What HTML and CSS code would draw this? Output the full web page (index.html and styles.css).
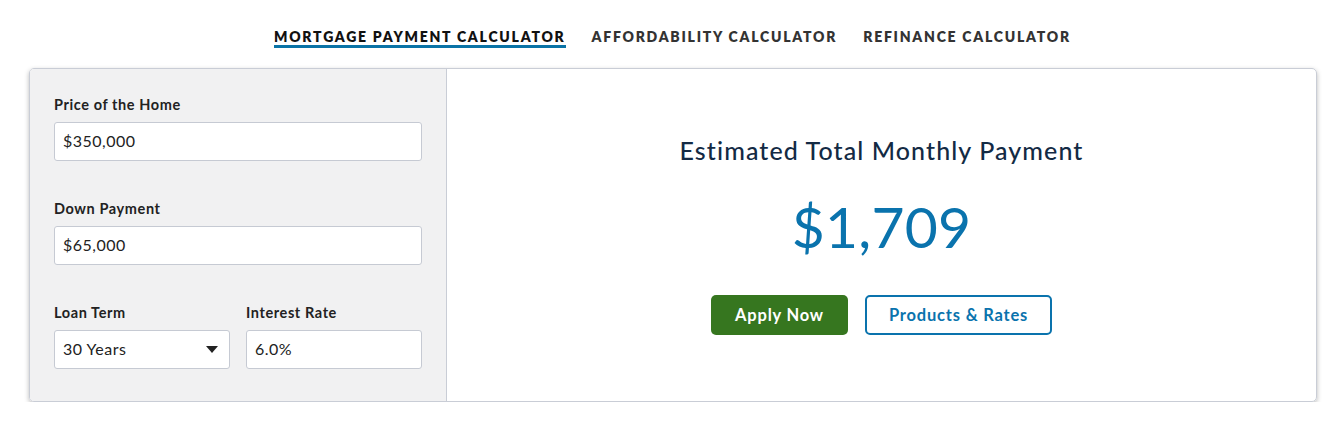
FILE: index.html
```html
<!DOCTYPE html>
<html lang="en">
<head>
<meta charset="utf-8">
<title>Mortgage Calculator</title>
<link rel="stylesheet" href="styles.css">
</head>
<body>
<div class="page">
  <nav class="tabs">
    <a class="tab active">MORTGAGE PAYMENT CALCULATOR</a>
    <a class="tab">AFFORDABILITY CALCULATOR</a>
    <a class="tab">REFINANCE CALCULATOR</a>
  </nav>
  <div class="card">
    <div class="inputs">
      <div class="field">
        <label class="label">Price of the Home</label>
        <div class="input">$350,000</div>
      </div>
      <div class="field">
        <label class="label">Down Payment</label>
        <div class="input">$65,000</div>
      </div>
      <div class="row">
        <div class="field">
          <label class="label">Loan Term</label>
          <div class="input select"><span>30 Years</span><span class="caret"></span></div>
        </div>
        <div class="field">
          <label class="label">Interest Rate</label>
          <div class="input">6.0%</div>
        </div>
      </div>
    </div>
    <div class="result">
      <h2 class="title">Estimated Total Monthly Payment</h2>
      <div class="amount">$1,709</div>
      <div class="buttons">
        <a class="btn primary">Apply Now</a>
        <a class="btn outline">Products &amp; Rates</a>
      </div>
    </div>
  </div>
</div>
</body>
</html>
```
FILE: styles.css
```css
* { box-sizing: border-box; }
html, body { margin: 0; padding: 0; background: #fff; }
body { font-family: "Lato", "Open Sans", sans-serif; color: #222; }
.page { padding: 0 20px 0 29px; width: 1336px; }
.tabs { display: flex; justify-content: center; gap: 26px; padding-top: 29px; }
.tab {
  font-weight: 800; font-size: 14px; letter-spacing: 1.75px; color: #333;
  line-height: 16px; padding-bottom: 0; border-bottom: 3px solid transparent;
}
.tab.active { color: #111; border-bottom-color: #0a73a6; }
.card {
  margin-top: 20px; width: 1288px; height: 334px;
  border: 1px solid #c9cdd6; border-radius: 5px;
  display: flex; overflow: hidden;
  box-shadow: 0 2px 5px rgba(0,0,0,0.28);
}
.inputs {
  width: 417px; background: #f1f1f2; border-right: 1px solid #c9cdd6;
  padding: 28px 24px 0 24px; display: flex; flex-direction: column; gap: 40px;
}
.field { display: flex; flex-direction: column; }
.label { font-weight: 700; font-size: 14.5px; letter-spacing: 0.6px; color: #222; line-height: 16px; margin-bottom: 9px; }
.input {
  height: 39px; background: #fff; border: 1px solid #c6cad3; border-radius: 3px;
  font-size: 16px; color: #222; padding: 0 8px 2px; display: flex; align-items: center;
  letter-spacing: 0.5px;
}
.row { display: flex; gap: 16px; }
.row .field { width: 176px; }
.select { justify-content: space-between; padding-right: 11px; }
.caret { width: 0; height: 0; border-left: 6px solid transparent; border-right: 6px solid transparent; border-top: 7px solid #222; margin-top: 2px; }
.result { flex: 1; display: flex; flex-direction: column; align-items: center; padding-top: 65px; }
.title { margin: 0; font-weight: 500; font-size: 25px; letter-spacing: 1.1px; color: #132a44; line-height: 32px; }
.amount { font-size: 57px; font-weight: 400; color: #0a73ad; line-height: 62px; margin-top: 29px; letter-spacing: 0.2px; }
.buttons { display: flex; gap: 17px; margin-top: 38px; }
.btn { height: 40px; border-radius: 5px; display: flex; align-items: center; justify-content: center; font-weight: 700; font-size: 16.5px; letter-spacing: 0.8px; }
.primary { width: 137px; background: #36761f; color: #fff; }
.outline { width: 187px; border: 2px solid #0a73ad; color: #0a73ad; }
```
